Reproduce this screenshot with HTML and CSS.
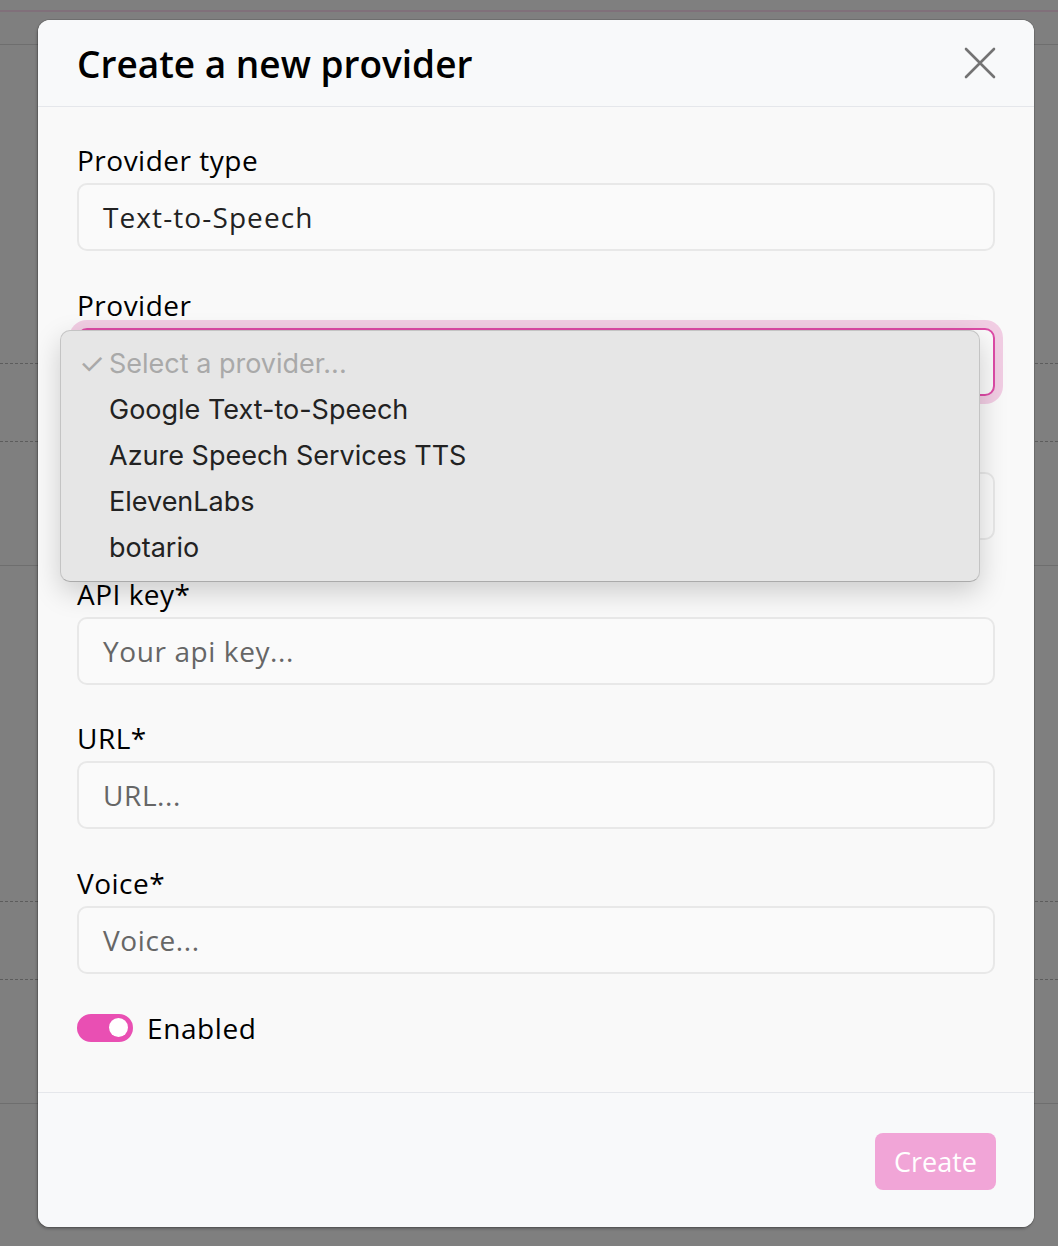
FILE: index.html
```html
<!DOCTYPE html>
<html lang="en">
<head>
    <meta charset="UTF-8">
    <meta name="viewport" content="width=device-width, initial-scale=1.0">
    <title>Create a new provider</title>
    <link rel="stylesheet" href="styles.css">
</head>
<body>

    <!-- Page behind the overlay -->
    <div class="page">
        <div class="page-top"></div>
        <div class="page-accent"></div>
        <div class="page-head"></div>
        <div class="page-row dashed" style="height: 318px"></div>
        <div class="page-row dashed" style="height: 77px"></div>
        <div class="page-row" style="height: 123px"></div>
        <div class="page-row dashed" style="height: 335px"></div>
        <div class="page-row dashed" style="height: 77px"></div>
        <div class="page-row" style="height: 123px"></div>
    </div>

    <!-- Create provider dialog -->
    <div class="modal">
        <div class="modal-header">
            <h2>Create a new provider</h2>
            <button class="close-btn" aria-label="Close">
                <svg width="34" height="34" viewBox="0 0 34 34">
                    <path d="M3 3 L31 31 M31 3 L3 31" stroke="#737373" stroke-width="2.6" stroke-linecap="round" fill="none"/>
                </svg>
            </button>
        </div>

        <form class="modal-body" id="provider-form">
            <div class="form-group">
                <label>Provider type</label>
                <div class="input">Text-to-Speech</div>
            </div>

            <div class="form-group">
                <label>Provider</label>
                <div class="select-wrap">
                    <div class="input focused"></div>
                    <ul class="menu">
                        <li class="muted"><span class="check">✓</span>Select a provider...</li>
                        <li>Google Text-to-Speech</li>
                        <li>Azure Speech Services TTS</li>
                        <li>ElevenLabs</li>
                        <li>botario</li>
                    </ul>
                </div>
            </div>

            <!-- field covered by the open dropdown -->
            <div class="form-group">
                <label></label>
                <div class="input placeholder"></div>
            </div>

            <div class="form-group">
                <label>API key*</label>
                <div class="input placeholder">Your api key...</div>
            </div>

            <div class="form-group">
                <label>URL*</label>
                <div class="input placeholder">URL...</div>
            </div>

            <div class="form-group">
                <label>Voice*</label>
                <div class="input placeholder">Voice...</div>
            </div>

            <div class="toggle-row">
                <span class="toggle"><span class="knob"></span></span>
                <span>Enabled</span>
            </div>
        </form>

        <div class="modal-footer">
            <button class="create-btn" disabled>Create</button>
        </div>
    </div>

</body>
</html>
```

FILE: styles.css
```css
body {
    margin: 0;
    height: 1246px;
    overflow: hidden;
    background: #7f7f7f;
    font-family: 'Open Sans', sans-serif;
    color: #000;
}

/* background page, dimmed */
.page-top {
    height: 10px;
}

.page-accent {
    height: 2px;
    background: #80707a;
}

.page-head {
    height: 32px;
    border-bottom: 1px solid #6e6e6e;
}

.page-row {
    border-bottom: 1px solid #6e6e6e;
}

.page-row.dashed {
    border-bottom: 1px dashed #5c5c5c;
}

/* dialog */
.modal {
    position: absolute;
    top: 20px;
    left: 38px;
    width: 996px;
    height: 1207px;
    display: flex;
    flex-direction: column;
    background: #f9f9f9;
    border-radius: 12px;
    box-shadow: 0 0 0 1px rgba(0, 0, 0, 0.12), -1px 2px 3px rgba(0, 0, 0, 0.25);
}

.modal-header {
    height: 86px;
    display: flex;
    align-items: center;
    justify-content: space-between;
    padding: 0 37px 0 39px;
    background: #f8f9fa;
    border-bottom: 1px solid #e5e7eb;
    border-radius: 12px 12px 0 0;
}

.modal-header h2 {
    margin: 0;
    font-size: 37px;
    font-weight: 600;
}

.close-btn {
    border: none;
    background: none;
    padding: 0;
    width: 34px;
    height: 34px;
    display: flex;
}

.modal-body {
    flex: 1;
    padding: 36px 39px 0;
    display: flex;
    flex-direction: column;
    gap: 36.5px;
}

.form-group label {
    display: block;
    height: 40px;
    line-height: 35px;
    font-size: 28px;
    letter-spacing: 0.5px;
}

.input {
    box-sizing: border-box;
    height: 68px;
    border: 2px solid #e8e8e8;
    border-radius: 10px;
    padding: 0 24px;
    display: flex;
    align-items: center;
    font-size: 28px;
    letter-spacing: 1.1px;
    color: #222;
    background: #fafafa;
}

.input.placeholder {
    color: #666;
    letter-spacing: 0.6px;
}

.input.focused {
    border-color: #dd4aa6;
    box-shadow: 0 0 0 8px #f1cde3;
}

.select-wrap {
    position: relative;
}

/* native-looking dropdown list */
.menu {
    position: absolute;
    top: 2px;
    left: -17px;
    width: 920px;
    box-sizing: border-box;
    margin: 0;
    padding: 10px 0;
    list-style: none;
    background: #e6e6e6;
    border: 1px solid #c4c4c4;
    border-bottom-color: #aaa;
    border-radius: 10px;
    box-shadow: 0 10px 28px rgba(0, 0, 0, 0.18);
    font-family: 'Inter', sans-serif;
    font-size: 27px;
    color: #222;
}

.menu li {
    position: relative;
    height: 46px;
    line-height: 46px;
    padding-left: 48px;
}

.menu li.muted {
    color: #a9a9a9;
}

.menu .check {
    position: absolute;
    left: 18px;
    font-size: 29px;
}

.toggle-row {
    margin-top: 3.5px;
    display: flex;
    align-items: center;
    gap: 14px;
    height: 28px;
    line-height: 28px;
    font-size: 28px;
    letter-spacing: 0.6px;
}

.toggle {
    width: 56px;
    height: 28px;
    border-radius: 14px;
    background: #e94fb3;
    display: flex;
    align-items: center;
    justify-content: flex-end;
    padding-right: 5px;
    box-sizing: border-box;
}

.knob {
    width: 19px;
    height: 19px;
    border-radius: 50%;
    background: #fff;
}

.modal-footer {
    height: 135px;
    box-sizing: border-box;
    padding: 40px 38px 0;
    display: flex;
    justify-content: flex-end;
    align-items: flex-start;
    background: #f8f9fa;
    border-top: 1px solid #e5e7eb;
    border-radius: 0 0 12px 12px;
}

.create-btn {
    width: 121px;
    height: 57px;
    border: none;
    border-radius: 8px;
    background: #f1a5d7;
    color: #fff;
    font-family: 'Open Sans', sans-serif;
    font-size: 27px;
}
```
